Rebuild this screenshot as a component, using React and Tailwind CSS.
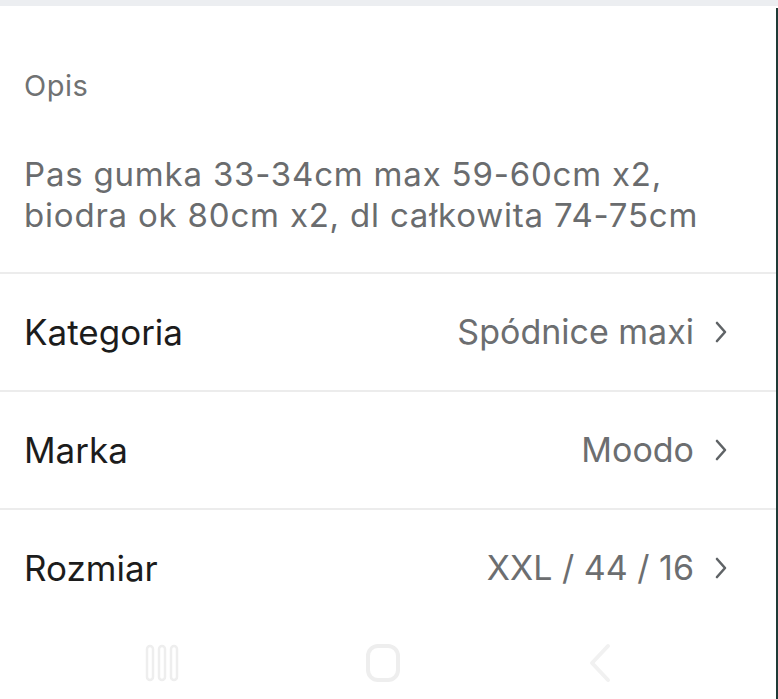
import React from "react";

const font = { fontFamily: "Inter, 'Noto Sans', sans-serif" };

function Chevron() {
  return (
    <svg width="12" height="24" viewBox="0 0 12 24" className="ml-[21px] shrink-0">
      <path d="M2 3 L10 12 L2 21" fill="none" stroke="#5f6366" strokeWidth="2.6" strokeLinecap="round" strokeLinejoin="round" />
    </svg>
  );
}

function Row({ label, value }) {
  return (
    <div className="flex items-center justify-between h-[118px] pl-[24px] pr-[51px] border-t-2 border-[#ececec]">
      <span className="text-[35px] leading-[40px] text-[#1c1c1c]">{label}</span>
      <span className="flex items-center text-[34px] leading-[40px] text-[#6c6e70]">
        {value}
        <Chevron />
      </span>
    </div>
  );
}

export default function App() {
  return (
    <div className="w-[778px] h-[699px] bg-white overflow-hidden flex flex-col relative" style={font}>
      <div className="h-[6px] bg-[#eceef1]" />
      <div className="h-[266px] pl-[24px] pt-[60px]">
        <div className="text-[29px] tracking-[0.5px] text-[#707273] leading-[40px]">Opis</div>
        <div className="mt-[48px] text-[33px] leading-[41px] tracking-[0.8px] text-[#6a6c6e]">
          Pas gumka 33-34cm max 59-60cm x2,
          <br />
          biodra ok 80cm x2, dl całkowita 74-75cm
        </div>
      </div>
      <Row label="Kategoria" value="Spódnice maxi" />
      <Row label="Marka" value="Moodo" />
      <Row label="Rozmiar" value="XXL / 44 / 16" />
      <div className="flex-1 flex items-center justify-center gap-[186px] pr-[20px]">
        <svg width="34" height="40" viewBox="0 0 34 40">
          <g fill="none" stroke="#eeeeee" strokeWidth="2.5">
            <rect x="2" y="3" width="6" height="34" rx="3" />
            <rect x="14" y="3" width="6" height="34" rx="3" />
            <rect x="26" y="3" width="6" height="34" rx="3" />
          </g>
        </svg>
        <svg width="36" height="40" viewBox="0 0 36 40">
          <rect x="3" y="3" width="30" height="34" rx="10" fill="none" stroke="#eeeeee" strokeWidth="4" />
        </svg>
        <svg width="26" height="40" viewBox="0 0 26 40">
          <path d="M21 3 L5 20 L21 37" fill="none" stroke="#f1f1f1" strokeWidth="4" strokeLinecap="round" strokeLinejoin="round" />
        </svg>
      </div>
      <div className="absolute right-0 top-[8px] bottom-0 w-[2px] bg-[#1e3a36]" />
    </div>
  );
}
